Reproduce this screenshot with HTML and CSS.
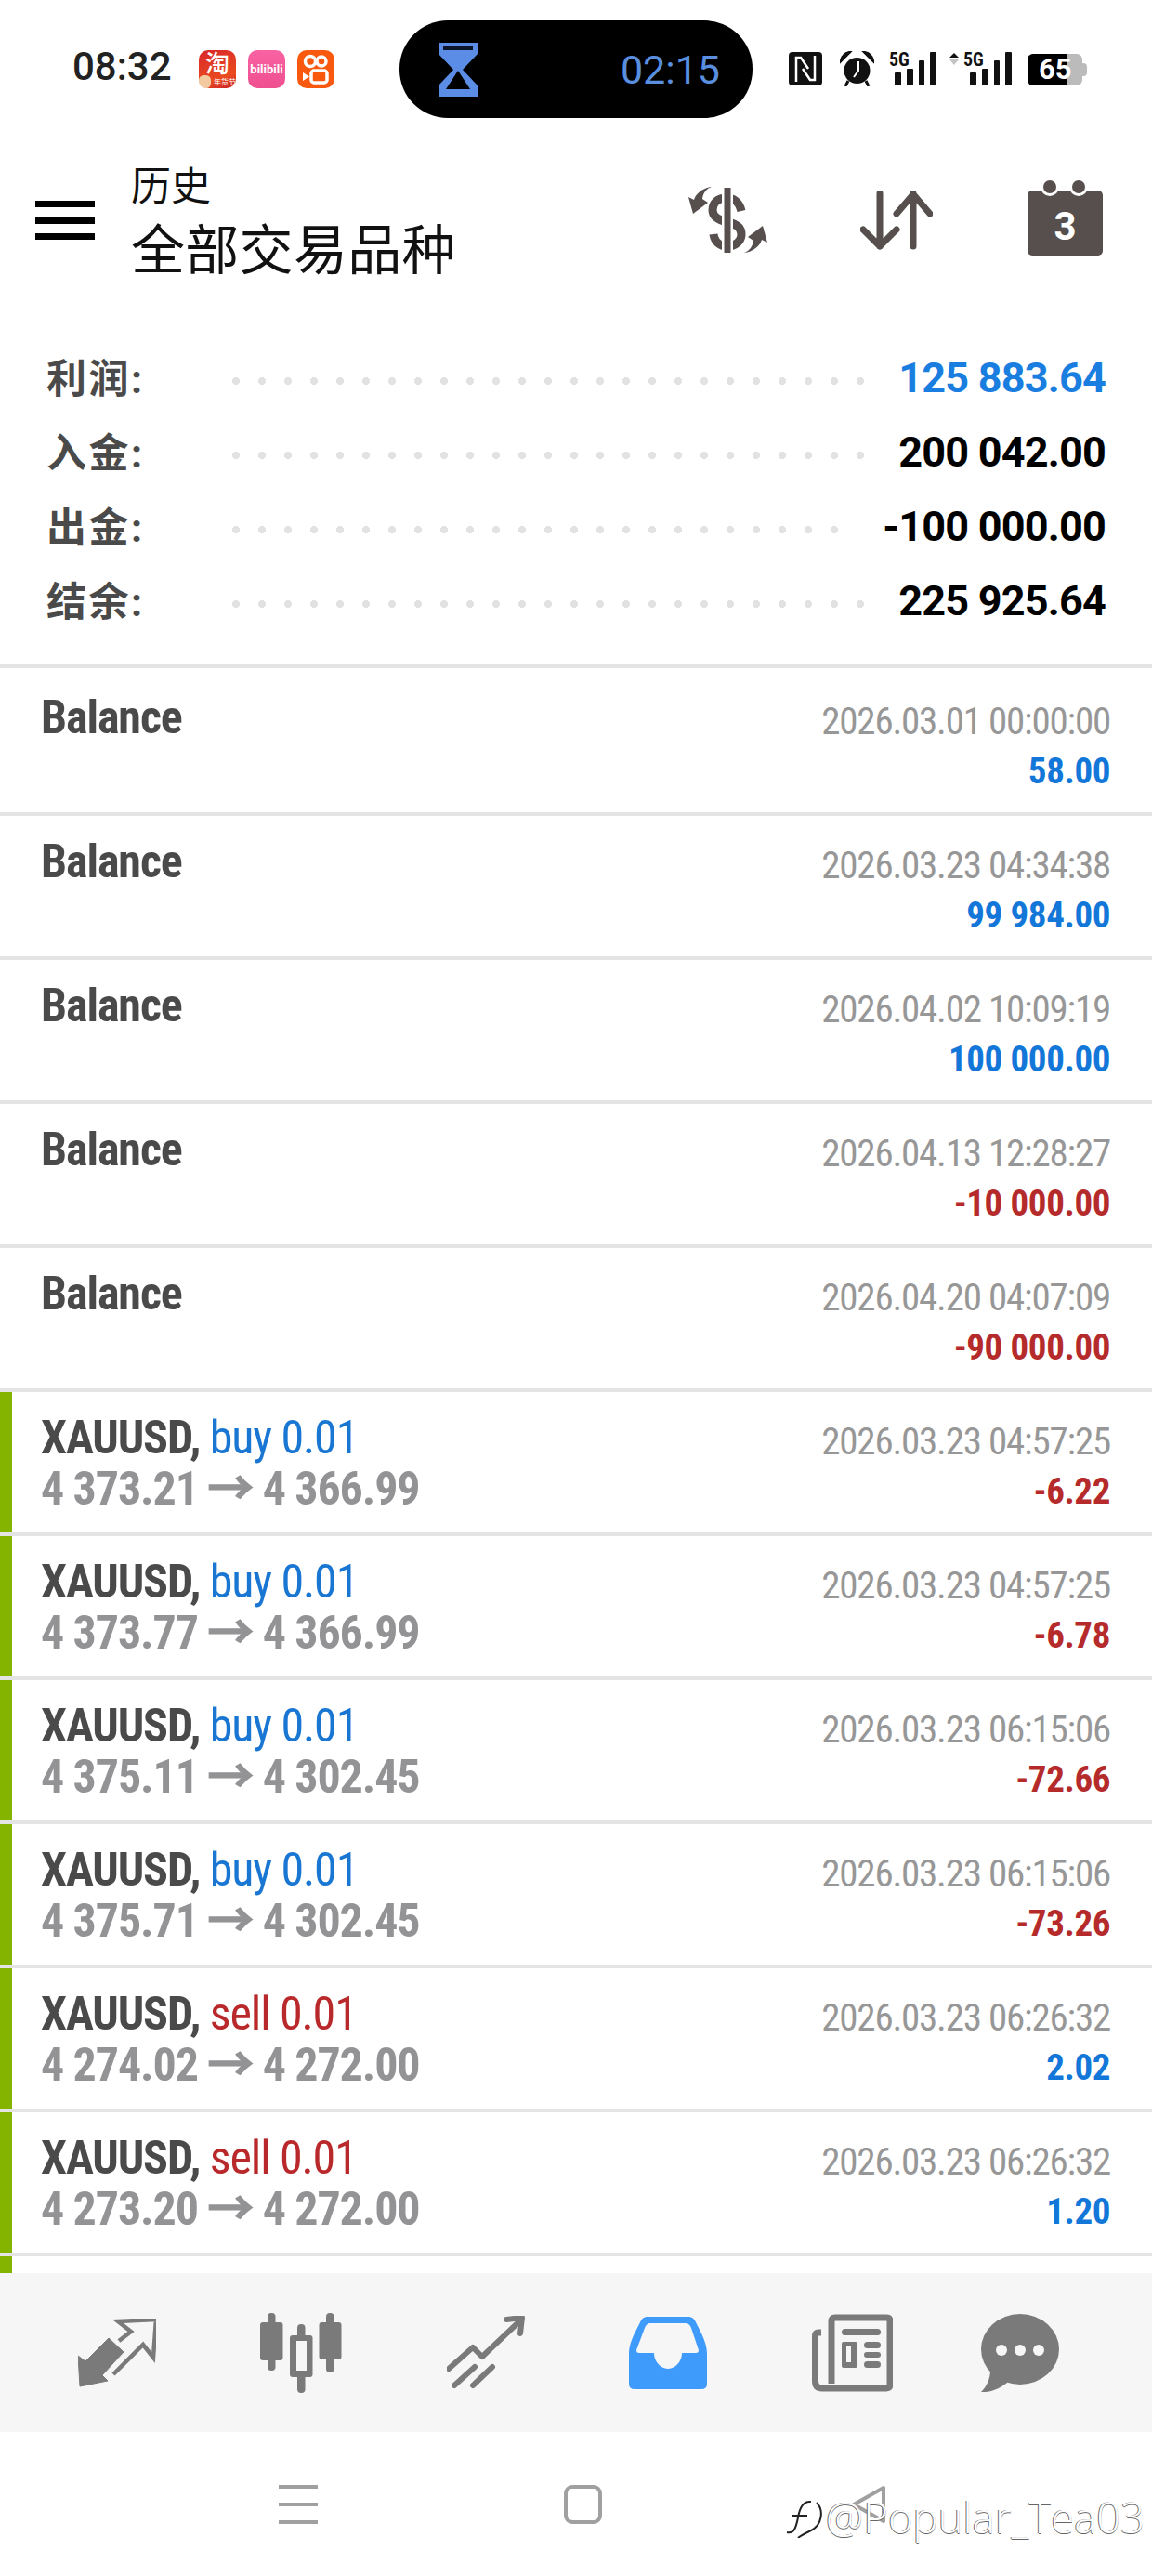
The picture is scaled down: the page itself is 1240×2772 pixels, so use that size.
FILE: index.html
```html
<!DOCTYPE html>
<html lang="en">

<head>
    <meta charset="UTF-8">
    <meta name="viewport" content="width=device-width, initial-scale=1.0">
    <title>历史</title>
    <link rel="stylesheet" href="styles.css">
</head>

<body>
    <div class="phone">
        <!-- Status bar -->
        <div class="statusbar">
            <span class="clock">08:32</span>
            <div class="apps">
                <div class="app app-tao"><span>淘</span><small>年货节</small></div>
                <div class="app app-bili"><span>bilibili</span></div>
                <div class="app app-kuai">
                    <svg width="40" height="41" viewBox="0 0 40 41">
                        <circle cx="14" cy="12" r="5.500" fill="none" stroke="#fff" stroke-width="3.5" />
                        <circle cx="26" cy="12" r="5" fill="none" stroke="#fff" stroke-width="3.5" />
                        <rect x="15" y="22" width="17" height="13" rx="3" fill="none" stroke="#fff" stroke-width="3.5" />
                        <path d="M6 24 L13 28.500 L6 33Z" fill="#fff" />
                    </svg>
                </div>
            </div>
            <div class="pill">
                <svg width="42" height="58" viewBox="0 0 42 58">
                    <path d="M0 0H42V12L26 29L42 46V58H0V46L16 29L0 12Z" fill="#5b8de6" />
                    <rect x="5" y="4" width="32" height="4" fill="#0b1428" />
                    <path d="M21 30L34 50H8Z" fill="#000" />
                </svg>
                <span class="pill-time">02:15</span>
            </div>
            <div class="status-icons">
                <svg width="36" height="36" viewBox="0 0 36 36">
                    <rect width="36" height="36" rx="4" fill="#111" />
                    <path d="M8 32V6H13L21 18M28 4V30H23L15 18" fill="none" stroke="#fff" stroke-width="2.5" />
                </svg>
                <svg class="icon-alarm" width="37" height="38" viewBox="0 0 37 38">
                    <circle cx="18.5" cy="21" r="14" fill="#111" />
                    <path d="M1 11C2 5 6 2 11 1L1 11ZM36 11C35 5 31 2 26 1L36 11Z" fill="#111" stroke="#111" stroke-width="2.5" />
                    <path d="M9 32L6 38M28 32L31 38" stroke="#111" stroke-width="3" />
                    <path d="M20 11V21L15 28" fill="none" stroke="#fff" stroke-width="2" />
                </svg>
                <div class="sig sig-one">
                    <span class="sig-label">5G</span>
                    <svg width="51" height="36" viewBox="0 0 51 36">
                        <rect x="6" y="22" width="7" height="14" rx="1" />
                        <rect x="19" y="18" width="7" height="18" rx="1" />
                        <rect x="32" y="9" width="6" height="27" rx="1" />
                        <rect x="44" y="0" width="7" height="36" rx="1" />
                    </svg>
                </div>
                <div class="sig sig-two">
                    <span class="sig-label">5G</span>
                    <svg width="68" height="36" viewBox="0 0 68 36">
                        <path d="M0 6L5 1L10 6Z" fill="#111" />
                        <path d="M0 8H10L5 14Z" fill="#c4c4c4" />
                        <rect x="22" y="22" width="7" height="14" rx="1" />
                        <rect x="35" y="18" width="7" height="18" rx="1" />
                        <rect x="48" y="9" width="6" height="27" rx="1" />
                        <rect x="60" y="0" width="7" height="36" rx="1" />
                    </svg>
                </div>
                <div class="battery">
                    <div class="battery-fill"></div>
                    <span>65</span>
                </div>
            </div>
        </div>

        <!-- Toolbar -->
        <div class="toolbar">
            <div class="burger"><i></i><i></i><i></i></div>
            <div class="toolbar-title">
                <div class="title-small">历史</div>
                <div class="title-big">全部交易品种</div>
            </div>
            <div class="toolbar-icons">
                <svg width="85" height="72" viewBox="0 0 85 72">
                    <path d="M57 27C55 17 48 13 41 13C31 13 26 19 26 26C26 34 33 37 42 39C52 41 57 45 57 52C57 60 50 65 42 65C34 65 28 60 27 52" fill="none" stroke="#564f4e" stroke-width="9" />
                    <rect x="36" y="2" width="12" height="70" fill="#fff" />
                    <rect x="38.500" y="2" width="7" height="70" fill="#564f4e" />
                    <g id="turn-arrow">
                        <path d="M25 1C19 3 16 8 15 14L21 18L5 30L0 12L6 15C8 8 16 2 25 1Z" fill="#564f4e" />
                    </g>
                    <use href="#turn-arrow" transform="rotate(180 42.5 36.500)" />
                </svg>
                <svg class="icon-sort" width="78" height="64" viewBox="0 0 78 64">
                    <path d="M21 3V60M3 42L21 60L39 42M57 60V3M39 25L57 4L75 25" fill="none" stroke="#564f4e" stroke-width="7" stroke-linecap="round" stroke-linejoin="round" />
                </svg>
                <svg class="icon-cal" width="81" height="82" viewBox="0 0 81 82">
                    <rect x="0" y="12" width="81" height="70" rx="5" fill="#564f4e" />
                    <circle cx="24" cy="8" r="10" fill="#fff" />
                    <circle cx="55" cy="8" r="10" fill="#fff" />
                    <circle cx="24" cy="8" r="7" fill="#564f4e" />
                    <circle cx="55" cy="8" r="7" fill="#564f4e" />
                    <text x="40.5" y="65" class="cal-day">3</text>
                </svg>
            </div>
        </div>

        <!-- Account totals -->
        <div class="summary">
            <div class="sum-row"><span class="sum-label">利润:</span><span class="dots"></span><span class="sum-value blue">125 883.64</span></div>
            <div class="sum-row"><span class="sum-label">入金:</span><span class="dots"></span><span class="sum-value">200 042.00</span></div>
            <div class="sum-row"><span class="sum-label">出金:</span><span class="dots"></span><span class="sum-value">-100 000.00</span></div>
            <div class="sum-row"><span class="sum-label">结余:</span><span class="dots"></span><span class="sum-value">225 925.64</span></div>
        </div>

        <!-- Deals -->
        <div class="list">
            <div class="row"><div class="row-body">
                <div class="deal"><div class="deal-title">Balance</div></div>
                <div class="deal-right"><div class="deal-date">2026.03.01 00:00:00</div><div class="deal-profit profit-up">58.00</div></div>
            </div></div>
            <div class="row"><div class="row-body">
                <div class="deal"><div class="deal-title">Balance</div></div>
                <div class="deal-right"><div class="deal-date">2026.03.23 04:34:38</div><div class="deal-profit profit-up">99 984.00</div></div>
            </div></div>
            <div class="row"><div class="row-body">
                <div class="deal"><div class="deal-title">Balance</div></div>
                <div class="deal-right"><div class="deal-date">2026.04.02 10:09:19</div><div class="deal-profit profit-up">100 000.00</div></div>
            </div></div>
            <div class="row"><div class="row-body">
                <div class="deal"><div class="deal-title">Balance</div></div>
                <div class="deal-right"><div class="deal-date">2026.04.13 12:28:27</div><div class="deal-profit profit-down">-10 000.00</div></div>
            </div></div>
            <div class="row"><div class="row-body">
                <div class="deal"><div class="deal-title">Balance</div></div>
                <div class="deal-right"><div class="deal-date">2026.04.20 04:07:09</div><div class="deal-profit profit-down">-90 000.00</div></div>
            </div></div>
            <div class="row"><div class="row-body trade">
                <div class="deal"><div class="deal-title">XAUUSD, <span class="side-buy">buy 0.01</span></div><div class="deal-price">4 373.21 <span class="arrow">→</span> 4 366.99</div></div>
                <div class="deal-right"><div class="deal-date">2026.03.23 04:57:25</div><div class="deal-profit profit-down">-6.22</div></div>
            </div></div>
            <div class="row"><div class="row-body trade">
                <div class="deal"><div class="deal-title">XAUUSD, <span class="side-buy">buy 0.01</span></div><div class="deal-price">4 373.77 <span class="arrow">→</span> 4 366.99</div></div>
                <div class="deal-right"><div class="deal-date">2026.03.23 04:57:25</div><div class="deal-profit profit-down">-6.78</div></div>
            </div></div>
            <div class="row"><div class="row-body trade">
                <div class="deal"><div class="deal-title">XAUUSD, <span class="side-buy">buy 0.01</span></div><div class="deal-price">4 375.11 <span class="arrow">→</span> 4 302.45</div></div>
                <div class="deal-right"><div class="deal-date">2026.03.23 06:15:06</div><div class="deal-profit profit-down">-72.66</div></div>
            </div></div>
            <div class="row"><div class="row-body trade">
                <div class="deal"><div class="deal-title">XAUUSD, <span class="side-buy">buy 0.01</span></div><div class="deal-price">4 375.71 <span class="arrow">→</span> 4 302.45</div></div>
                <div class="deal-right"><div class="deal-date">2026.03.23 06:15:06</div><div class="deal-profit profit-down">-73.26</div></div>
            </div></div>
            <div class="row"><div class="row-body trade">
                <div class="deal"><div class="deal-title">XAUUSD, <span class="side-sell">sell 0.01</span></div><div class="deal-price">4 274.02 <span class="arrow">→</span> 4 272.00</div></div>
                <div class="deal-right"><div class="deal-date">2026.03.23 06:26:32</div><div class="deal-profit profit-up">2.02</div></div>
            </div></div>
            <div class="row"><div class="row-body trade">
                <div class="deal"><div class="deal-title">XAUUSD, <span class="side-sell">sell 0.01</span></div><div class="deal-price">4 273.20 <span class="arrow">→</span> 4 272.00</div></div>
                <div class="deal-right"><div class="deal-date">2026.03.23 06:26:32</div><div class="deal-profit profit-up">1.20</div></div>
            </div></div>
            <div class="row"><div class="row-body trade"></div></div>
        </div>

        <!-- Bottom tabs -->
        <div class="tabs">
            <svg width="84" height="74" viewBox="0 0 84 74">
                <path d="M44 24L57 14L43 3L84 1L81 42L70 28L38 60" fill="none" stroke="#7a7a7a" stroke-width="4.5" />
                <path d="M33 21L49 36L26 61L32 67L2 73L0 40L8 46Z" fill="#7a7a7a" stroke="#7a7a7a" stroke-width="1" stroke-linejoin="round" />
            </svg>
            <svg width="88" height="86" viewBox="0 0 88 86">
                <rect x="0" y="10" width="24.500" height="41" rx="3" fill="#7a7a7a" />
                <rect x="8" y="0" width="8.500" height="62" rx="4" fill="#7a7a7a" />
                <rect x="40" y="12" width="8.500" height="74" rx="4" fill="#7a7a7a" />
                <rect x="32" y="24" width="24.500" height="45" rx="3" fill="#7a7a7a" />
                <rect x="39" y="30" width="11" height="32" fill="#f6f6f6" />
                <rect x="71" y="0" width="8.500" height="64" rx="4" fill="#7a7a7a" />
                <rect x="63.500" y="10" width="24" height="40" rx="3" fill="#7a7a7a" />
            </svg>
            <svg class="tab-trade" width="84" height="79" viewBox="0 0 84 79">
                <path d="M2 57L28 34L38 44L77 7M64 4L81 2L79 19M8 75L30 55M28 75L49 55" fill="none" stroke="#7a7a7a" stroke-width="6" stroke-linecap="round" stroke-linejoin="round" />
            </svg>
            <svg class="tab-history" width="84" height="78" viewBox="0 0 84 78">
                <path d="M20 0H64C68 0 70 2 72 6C78 18 84 28 84 40V72Q84 78 78 78H6Q0 78 0 72V40C0 28 6 18 12 6C14 2 16 0 20 0Z" fill="#3f9bfb" />
                <path d="M23 7H61C64 7 66 9 67 12L75 36Q75 39 72 39H57C57 48 50 56 42 56C34 56 27 48 27 39H11Q8 39 8 36L17 12C18 9 20 7 23 7Z" fill="#f6f6f6" />
            </svg>
            <svg class="tab-news" width="87" height="84" viewBox="0 0 87 84">
                <path d="M10 20H7Q3.500 20 3.500 24V72Q3.500 80 11 80H80Q84 80 84 76V8Q84 4 80 4H25Q21 4 21 8V75" fill="none" stroke="#7a7a7a" stroke-width="7" />
                <rect x="32" y="16" width="42" height="7" rx="3.500" fill="#7a7a7a" />
                <rect x="32" y="30" width="17" height="28" rx="2" fill="#7a7a7a" />
                <rect x="37" y="35" width="5" height="17" fill="#f6f6f6" />
                <rect x="56" y="30" width="18" height="7" rx="3.500" fill="#7a7a7a" />
                <rect x="56" y="41" width="18" height="6" rx="3" fill="#7a7a7a" />
                <rect x="56" y="51" width="18" height="7" rx="3.500" fill="#7a7a7a" />
            </svg>
            <svg class="tab-chat" width="84" height="84" viewBox="0 0 84 84">
                <ellipse cx="42" cy="38" rx="42" ry="38" fill="#7a7a7a" />
                <path d="M10 60C10 70 6 78 0 84C10 85 22 80 30 72Z" fill="#7a7a7a" />
                <circle cx="22" cy="39" r="6" fill="#f6f6f6" />
                <circle cx="42" cy="39" r="6" fill="#f6f6f6" />
                <circle cx="62" cy="39" r="6" fill="#f6f6f6" />
            </svg>
        </div>

        <!-- System navigation -->
        <div class="sysnav">
            <div class="sys-menu"><i></i><i></i><i></i></div>
            <div class="sys-home"></div>
            <svg class="sys-back" width="38" height="42" viewBox="0 0 38 42">
                <path d="M35 3V39L3 21Z" fill="none" stroke="#a0a0a0" stroke-width="4" stroke-linejoin="round" />
            </svg>
            <div class="watermark">
                <svg width="44" height="46" viewBox="0 0 44 46">
                    <path d="M2 40C10 42 12 34 14 24C16 12 20 6 28 7M8 22H24M34 8C42 16 40 32 28 38C22 41 16 44 14 46" fill="none" stroke="#222" stroke-width="2" />
                </svg>
                <span>@Popular_Tea03</span>
            </div>
        </div>
    </div>
</body>

</html>
```

FILE: styles.css
```css
/* Global Styles */
body {
    margin: 0;
    padding: 0;
    background-color: #fff;
    font-family: Roboto, "Noto Sans CJK SC", sans-serif;
}

.phone {
    position: relative;
    display: flex;
    flex-direction: column;
    width: 1240px;
    height: 2772px;
    overflow: hidden;
}

/* Status bar */
.statusbar {
    display: flex;
    align-items: flex-start;
    height: 150px;
    padding-top: 22px;
    box-sizing: border-box;
}

.clock {
    width: 135px;
    margin-left: 78px;
    margin-right: 1px;
    padding-top: 25px;
    font-size: 42px;
    line-height: 50px;
    font-weight: 500;
    color: #222;
}

.apps {
    display: flex;
    gap: 13px;
    width: 216px;
    margin-top: 32px;
}

.app {
    position: relative;
    width: 40px;
    height: 41px;
    border-radius: 10px;
    color: #fff;
    text-align: center;
}

.app-tao {
    background: linear-gradient(160deg, #d8262a, #ea4b1f 70%, #c81e2a);
}

.app-tao::before {
    content: "";
    position: absolute;
    left: 0;
    bottom: 0;
    width: 13px;
    height: 14px;
    border-radius: 50% 50% 50% 10px;
    background-color: #f3c9a0;
}

.app-tao span {
    display: block;
    position: relative;
    font-size: 26px;
    line-height: 30px;
    font-weight: 500;
}

.app-tao small {
    display: block;
    position: relative;
    font-size: 8px;
    line-height: 10px;
    text-align: right;
}

.app-bili {
    background: linear-gradient(#f963a3, #ee4f8f);
    font-size: 13px;
    line-height: 41px;
    font-weight: 700;
}

.app-kuai {
    background-color: #f9580f;
}

.pill {
    display: flex;
    align-items: center;
    justify-content: space-between;
    width: 380px;
    height: 105px;
    padding: 0 35px 0 42px;
    box-sizing: border-box;
    border-radius: 52px;
    background-color: #000;
}

.pill-time {
    font-size: 43px;
    color: #5a8fe0;
}

.status-icons {
    display: flex;
    align-items: flex-start;
    margin-left: 39px;
    margin-top: 34px;
}

.icon-alarm {
    margin-left: 19px;
    margin-top: -1px;
}

.sig {
    position: relative;
    height: 36px;
}

.sig-one {
    margin-left: 16px;
}

.sig-two {
    margin-left: 14px;
}

.sig svg {
    display: block;
    fill: #111;
}

.sig-label {
    position: absolute;
    top: -1px;
    left: 0;
    font-size: 20px;
    line-height: 18px;
    font-weight: 700;
    font-stretch: 75%;
    color: #111;
}

.sig-two .sig-label {
    left: 15px;
}

.battery {
    position: relative;
    width: 59px;
    height: 34px;
    margin-left: 16px;
    margin-top: 2px;
    border-radius: 6px;
    background-color: #bbb;
}

.battery::after {
    content: "";
    position: absolute;
    left: 59px;
    top: 10px;
    width: 5px;
    height: 14px;
    border-radius: 0 4px 4px 0;
    background-color: #bbb;
}

.battery-fill {
    width: 43px;
    height: 34px;
    border-radius: 6px 0 0 6px;
    background-color: #000;
}

.battery span {
    position: absolute;
    left: 12px;
    top: 0;
    font-size: 31px;
    line-height: 34px;
    font-weight: 700;
    color: #fff;
}

/* Toolbar */
.toolbar {
    display: flex;
    align-items: flex-start;
    height: 216px;
    flex-shrink: 0;
}

.burger {
    display: flex;
    flex-direction: column;
    gap: 10.500px;
    width: 64px;
    margin-left: 38px;
    margin-top: 66px;
}

.burger i {
    display: block;
    height: 7px;
    background-color: #000;
}

.toolbar-title {
    margin-left: 39px;
    margin-top: 25px;
    color: #111;
}

.title-small {
    font-size: 43px;
    line-height: 52px;
}

.title-big {
    margin-top: 5px;
    font-size: 58px;
    line-height: 76px;
    letter-spacing: 0.300px;
}

.toolbar-icons {
    display: flex;
    align-items: flex-start;
    margin-left: 250px;
    margin-top: 50px;
}

.icon-sort {
    margin-left: 100px;
    margin-top: 5px;
}

.icon-cal {
    margin-left: 102px;
    margin-top: -7px;
}

.cal-day {
    font-family: Roboto, sans-serif;
    font-size: 42px;
    font-weight: 700;
    fill: #fff;
    text-anchor: middle;
}

/* Totals */
.summary {
    height: 349px;
    flex-shrink: 0;
}

.sum-row {
    display: flex;
    align-items: center;
    height: 80px;
    padding: 0 50px 0 50px;
}

.sum-label {
    width: 200px;
    margin-top: -4px;
    font-size: 43px;
    font-weight: 700;
    letter-spacing: 2.500px;
    color: #4a4a4a;
}

.dots {
    flex: 1;
    height: 8px;
    margin-right: 36px;
    margin-top: 8px;
    background-image: radial-gradient(circle at 4px 4px, #e2e2e2 3.800px, transparent 4.300px);
    background-size: 28px 8px;
}

.sum-value {
    font-size: 45px;
    font-weight: 700;
    letter-spacing: -0.800px;
    color: #000;
}

.blue {
    color: #1a7ee0;
}

/* Deal list */
.list {
    flex: 1;
    overflow: hidden;
}

.row {
    height: 155px;
    border-top: 4px solid #e4e4e4;
    box-sizing: border-box;
}

.row:first-child {
    height: 159px;
}

.row:first-child .row-body {
    height: 155px;
    padding-top: 25px;
}

.row-body {
    display: flex;
    justify-content: space-between;
    height: 151px;
    padding: 21px 45px 0 44px;
    box-sizing: border-box;
}

.trade {
    padding-left: 31px;
    border-left: 13px solid #84b400;
}

.deal-title {
    font-size: 50px;
    line-height: 56px;
    font-weight: 700;
    font-stretch: 75%;
    letter-spacing: -1.100px;
    color: #4a4a4a;
}

.side-buy,
.side-sell {
    font-weight: 400;
}

.side-buy {
    color: #1976d2;
}

.side-sell {
    color: #b9282a;
}

.deal-price {
    font-size: 50px;
    line-height: 54px;
    font-weight: 700;
    font-stretch: 75%;
    letter-spacing: -1.100px;
    color: #939396;
}

.arrow {
    -webkit-text-stroke: 1.200px #939396;
}

.deal-right {
    text-align: right;
    padding-top: 5px;
}

.deal-date {
    font-size: 41px;
    line-height: 54px;
    font-stretch: 75%;
    letter-spacing: -1.200px;
    color: #979797;
}

.deal-profit {
    font-size: 39px;
    line-height: 54px;
    font-weight: 700;
    font-stretch: 75%;
    letter-spacing: -0.400px;
}

.profit-up {
    color: #1277d8;
}

.profit-down {
    color: #b52a2a;
}

/* Bottom tabs */
.tabs {
    display: flex;
    align-items: center;
    gap: 112px;
    flex-shrink: 0;
    height: 171px;
    padding: 0 0 0 84px;
    box-sizing: border-box;
    background-color: #f6f6f6;
}

.tab-trade {
    margin-left: 1px;
}

.tab-news {
    margin-left: 1px;
}

.tab-chat {
    margin-left: -17px;
}

/* System navigation */
.sysnav {
    position: relative;
    display: flex;
    align-items: flex-start;
    flex-shrink: 0;
    height: 155px;
    padding-top: 57px;
    box-sizing: border-box;
}

.sys-menu {
    display: flex;
    flex-direction: column;
    gap: 15px;
    width: 42px;
    margin-left: 300px;
}

.sys-menu i {
    display: block;
    height: 4px;
    background-color: #a0a0a0;
}

.sys-home {
    width: 41px;
    height: 42px;
    margin-left: 265px;
    box-sizing: border-box;
    border: 4px solid #a0a0a0;
    border-radius: 9px;
}

.sys-back {
    margin-left: 268px;
}

.watermark {
    position: absolute;
    left: 845px;
    top: 60px;
    display: flex;
    align-items: center;
    font-family: "Open Sans", sans-serif;
    font-size: 45.500px;
    font-weight: 300;
    color: #fff;
    text-shadow: -1px 0 0 #666, 0 1px 0 #666;
}
```
